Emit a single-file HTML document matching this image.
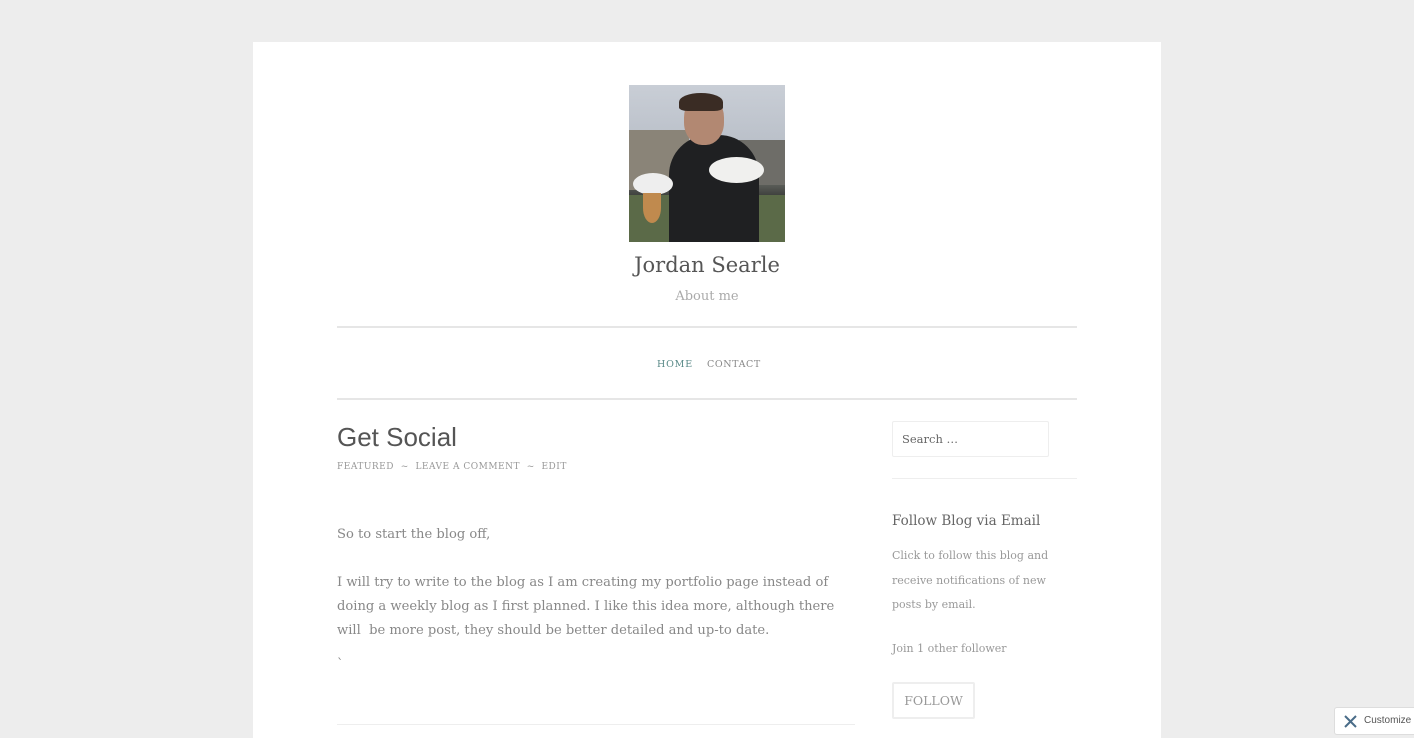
<!DOCTYPE html>
<html><head><meta charset="utf-8"><style>
*{margin:0;padding:0;box-sizing:border-box}
body{width:1414px;height:738px;background:#ededed;overflow:hidden;font-family:"DejaVu Serif","Liberation Serif",serif;color:#777}
.page{position:absolute;left:253px;top:42px;width:908px;height:696px;background:#fff}
.photo{position:absolute;left:376px;top:43px;width:156px;height:157px;overflow:hidden;background:linear-gradient(#c9ced6 0%,#b9bfc8 40%,#7d8079 55%,#40423f 70%,#2a2b2c 100%)}
.t{position:absolute;white-space:nowrap}
.hr{position:absolute;left:84px;width:740px;height:2px;background:#e6e6e6}
</style></head><body>
<div class="page">
<div class="photo">
<div style="position:absolute;left:0;top:45px;width:60px;height:60px;background:#8a8478"></div>
<div style="position:absolute;left:110px;top:55px;width:46px;height:45px;background:#6e6d68"></div>
<div style="position:absolute;left:0;top:110px;width:156px;height:47px;background:#5b6a48"></div>
<div style="position:absolute;left:40px;top:50px;width:90px;height:107px;background:#1f2022;border-radius:40px 40px 0 0"></div>
<div style="position:absolute;left:55px;top:10px;width:40px;height:50px;background:#b28872;border-radius:45%"></div>
<div style="position:absolute;left:50px;top:8px;width:44px;height:18px;background:#3a2c24;border-radius:50% 50% 20% 20%"></div>
<div style="position:absolute;left:4px;top:88px;width:40px;height:22px;background:#eee;border-radius:50%"></div>
<div style="position:absolute;left:80px;top:72px;width:55px;height:26px;background:#f0f0ee;border-radius:50%"></div>
<div style="position:absolute;left:14px;top:108px;width:18px;height:30px;background:#c08a4e;border-radius:0 0 50% 50%"></div>
</div>
<div class="t" style="left:0;width:908px;text-align:center;top:211px;font-size:21px;color:#555">Jordan Searle</div>
<div class="t" style="left:0;width:908px;text-align:center;top:247px;font-size:13px;color:#aaa">About me</div>
<div class="hr" style="top:284px"></div>
<div class="t" style="left:404px;top:317px;font-size:9.5px;letter-spacing:.8px;color:#5a8a88">HOME</div>
<div class="t" style="left:454px;top:317px;font-size:9.5px;letter-spacing:.6px;color:#888">CONTACT</div>
<div class="hr" style="top:356px"></div>
<div class="t" style="left:84px;top:380px;font-family:'Liberation Sans',sans-serif;font-size:26px;color:#555">Get Social</div>
<div class="t" style="left:84px;top:420px;font-size:9px;letter-spacing:.5px;color:#999">FEATURED &nbsp;~&nbsp; LEAVE A COMMENT &nbsp;~&nbsp; EDIT</div>
<div class="t" style="left:84px;top:485px;font-size:13.1px;color:#888">So to start the blog off,</div>
<div class="t" style="left:84px;top:529px;font-size:13.1px;line-height:24px;color:#888">I will try to write to the blog as I am creating my portfolio page instead of<br>doing a weekly blog as I first planned. I like this idea more, although there<br>will&nbsp; be more post, they should be better detailed and up-to date.</div>
<div class="t" style="left:84px;top:615px;font-size:13px;color:#888">`</div>
<div style="position:absolute;left:84px;top:682px;width:518px;height:1px;background:#eee"></div>
<div style="position:absolute;left:639px;top:379px;width:157px;height:36px;border:1px solid #eee;border-radius:2px"></div>
<div class="t" style="left:649px;top:390px;font-size:11.5px;color:#666">Search …</div>
<div style="position:absolute;left:639px;top:436px;width:185px;height:1px;background:#eee"></div>
<div class="t" style="left:639px;top:471px;font-size:13.5px;color:#666">Follow Blog via Email</div>
<div class="t" style="left:639px;top:502px;font-size:11px;line-height:24.5px;color:#999">Click to follow this blog and<br>receive notifications of new<br>posts by email.</div>
<div class="t" style="left:639px;top:600px;font-size:11px;color:#999">Join 1 other follower</div>
<div style="position:absolute;left:639px;top:640px;width:83px;height:37px;border:2px solid #eee;border-radius:2px;text-align:center;line-height:33px;font-size:12.5px;color:#999">FOLLOW</div>
</div>
<div style="position:absolute;left:1334px;top:707px;width:90px;height:28px;background:#fff;border:1px solid #ddd;border-radius:3px;font-family:'Liberation Sans',sans-serif;font-size:10px;color:#555;line-height:26px;padding-left:29px">Customize
<svg style="position:absolute;left:9px;top:7px" width="13" height="13" viewBox="0 0 13 13"><path d="M1 1 L12 12 M12 1 L1 12" stroke="#4a6c88" stroke-width="2"/></svg></div>
</body></html>
